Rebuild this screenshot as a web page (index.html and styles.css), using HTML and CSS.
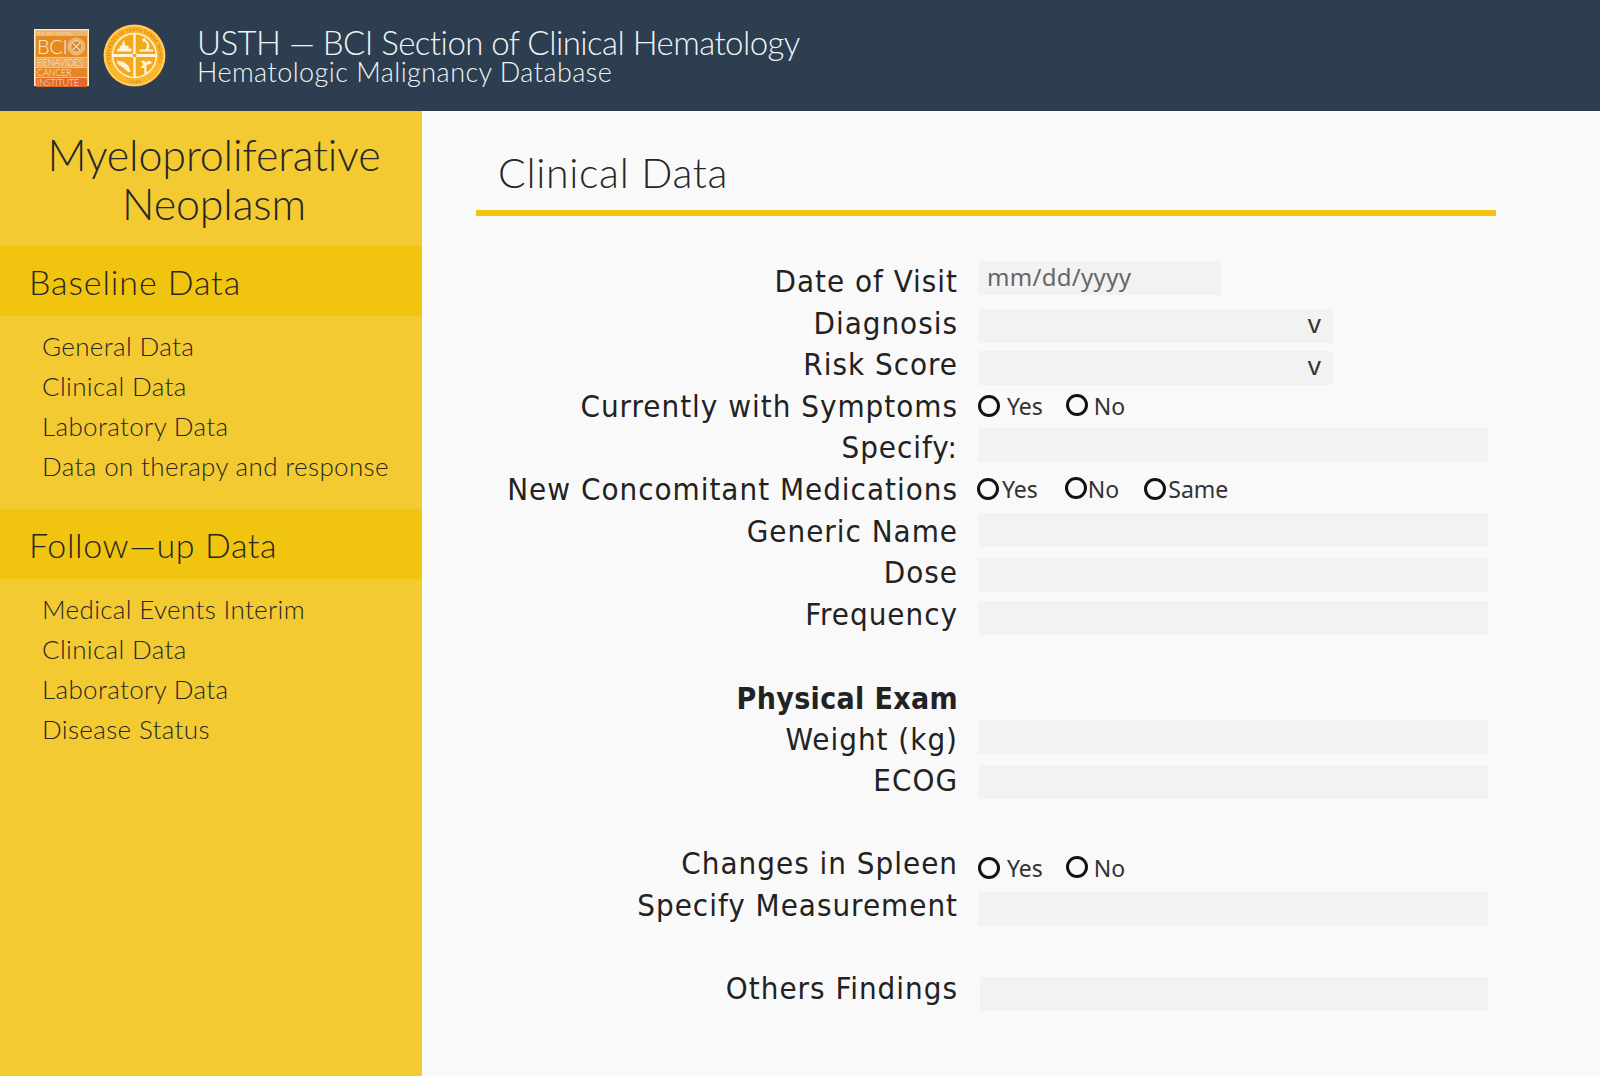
FILE: index.html
```html
<!DOCTYPE html>
<html lang="en">
<head>
<meta charset="utf-8">
<title>Clinical Data</title>
<link rel="stylesheet" href="styles.css">
</head>
<body>
<header class="topbar">
  <div class="logo-bci">
    <div class="bci-hosp">THE UST HOSPITAL</div>
    <div class="bci-main">
      <span class="bci-word">BCI</span>
      <svg class="bci-seal" viewBox="0 0 20 20"><circle cx="10" cy="10" r="9.500" fill="#eab071"/><circle cx="10" cy="10" r="9" fill="none" stroke="#fbe3c0" stroke-width=".6" stroke-dasharray="1 .7"/><circle cx="10" cy="10" r="6" fill="#d68a35" stroke="#fbe3c0" stroke-width=".8"/><path d="M6 6l8 8M14 6l-8 8" stroke="#fbe3c0" stroke-width="1.200"/></svg>
    </div>
    <div class="bci-line bci-l1">BENAVIDES</div>
    <div class="bci-line bci-l2">CANCER</div>
    <div class="bci-line bci-l3">INSTITUTE</div>
  </div>
  <svg class="logo-seal" viewBox="0 0 64 64">
    <defs><path id="seal-arc" d="M14.400 50a25 25 0 1 1 35.200 0"/></defs>
    <circle cx="32" cy="32" r="31.500" fill="#fbb62e"/>
    <circle cx="32" cy="32" r="30.300" fill="none" stroke="#ffe9ae" stroke-width=".8"/>
    <text class="seal-text"><textPath href="#seal-arc" startOffset="50%" text-anchor="middle">UNIVERSITY OF SANTO TOMAS MANILA</textPath></text>
    <text class="seal-year" x="32" y="60" text-anchor="middle">· 1 9 4 6 ·</text>
    <circle cx="32" cy="32" r="23" fill="#fff4d6"/>
    <path d="M30.700 10.500a22 22 0 0 0-20.100 20.100h20.100z" fill="#f6a81c"/>
    <path d="M33.300 10.500a22 22 0 0 1 20.100 20.100h-20.100z" fill="#f6a81c"/>
    <path d="M30.700 53.500a22 22 0 0 1-20.100-20.100h20.100z" fill="#f6a81c"/>
    <path d="M33.300 53.500a22 22 0 0 0 20.100-20.100h-20.100z" fill="#f6a81c"/>
    <circle cx="32" cy="32" r="2.400" fill="#f6a81c" stroke="#fff4d6" stroke-width=".9"/>
    <path d="M14 28h15v-3h-3v-3h-3l-2-6-2 6h-2v3h-2z" fill="#fff4d6"/>
    <path d="M37 28h14v-2.200h-5c2-3 1-7-2-9l-2-2.800-2.500 1.700 1.800 3 1.500-.8c2 1.500 2.500 5 .5 8h-6z" fill="#fff4d6"/>
    <path d="M14 37l7 1.500 5 4 2 6-2 .5-6-5-5-3z" fill="#fff4d6"/>
    <path d="M42 51h2.500l-.5-9 6-2.500-3-2.500-3.500 2-2-2-3 1 2.500 3-3 3.500 4 .5z" fill="#fff4d6"/>
  </svg>
  <div class="site-title">
    <div class="site-name">USTH — BCI Section of Clinical Hematology</div>
    <div class="site-sub">Hematologic Malignancy Database</div>
  </div>
</header>
<div class="layout">
  <aside class="sidebar">
    <h1 class="side-title">Myeloproliferative Neoplasm</h1>
    <h2 class="side-head">Baseline Data</h2>
    <ul class="side-list">
      <li>General Data</li>
      <li>Clinical Data</li>
      <li>Laboratory Data</li>
      <li>Data on therapy and response</li>
    </ul>
    <h2 class="side-head side-head-follow">Follow—up Data</h2>
    <ul class="side-list">
      <li>Medical Events Interim</li>
      <li>Clinical Data</li>
      <li>Laboratory Data</li>
      <li>Disease Status</li>
    </ul>
  </aside>
  <main class="content">
    <h2 class="page-title">Clinical Data</h2>
    <form class="form">
      <div class="row"><label class="lbl">Date of Visit</label><div class="field f-date">mm/dd/yyyy</div></div>
      <div class="row"><label class="lbl">Diagnosis</label><div class="field f-select f-diag">v</div></div>
      <div class="row"><label class="lbl">Risk Score</label><div class="field f-select f-risk">v</div></div>
      <div class="row"><label class="lbl">Currently with Symptoms</label><div class="radios"><span class="radio"></span><span class="opt">Yes</span><span class="radio r2"></span><span class="opt">No</span></div></div>
      <div class="row"><label class="lbl">Specify:</label><div class="field f-full f-specify"></div></div>
      <div class="row"><label class="lbl">New Concomitant Medications</label><div class="radios tight"><span class="radio"></span><span class="opt">Yes</span><span class="radio r2"></span><span class="opt">No</span><span class="radio r3"></span><span class="opt">Same</span></div></div>
      <div class="row"><label class="lbl">Generic Name</label><div class="field f-full f-generic"></div></div>
      <div class="row"><label class="lbl">Dose</label><div class="field f-full f-dose"></div></div>
      <div class="row"><label class="lbl">Frequency</label><div class="field f-full f-freq"></div></div>
      <div class="row r-spaced"><label class="lbl lbl-b">Physical Exam</label></div>
      <div class="row"><label class="lbl">Weight (kg)</label><div class="field f-full f-weight"></div></div>
      <div class="row"><label class="lbl">ECOG</label><div class="field f-full f-ecog"></div></div>
      <div class="row r-spaced"><label class="lbl">Changes in Spleen</label><div class="radios radios-low"><span class="radio"></span><span class="opt">Yes</span><span class="radio r2"></span><span class="opt">No</span></div></div>
      <div class="row"><label class="lbl">Specify Measurement</label><div class="field f-full f-measure"></div></div>
      <div class="row r-spaced"><label class="lbl">Others Findings</label><div class="field f-last"></div></div>
    </form>
  </main>
</div>
</body>
</html>
```
FILE: styles.css
```css
* { box-sizing: border-box; }
html, body { margin: 0; height: 100%; }
body { width: 1600px; height: 1076px; overflow: hidden; background: #f9f9f9; color: #222; font-family: "DejaVu Sans", sans-serif; }

.topbar { height: 111px; background: #2c3e50; display: flex; align-items: center; padding-left: 34px; }
.logo-bci { width: 55px; height: 57px; background: #f0c48c; border: 1px solid #fbe9c8; display: flex; flex-direction: column; padding: 1px 1px; color: #fdeccf; font-family: Lato, sans-serif; font-weight: 300; margin-top: 4px; }
.bci-hosp { font-size: 4px; line-height: 5px; height: 5px; background: #eeb26a; padding-left: 1px; white-space: nowrap; }
.bci-main { height: 21px; display: flex; align-items: center; justify-content: space-between; background: #e58a1f; padding: 0 1px; }
.bci-word { font-size: 20px; line-height: 21px; letter-spacing: -.3px; }
.bci-seal { width: 19px; height: 19px; }
.bci-line { font-size: 9px; line-height: 9px; height: 9px; margin-top: 1px; padding-left: 1px; letter-spacing: -.2px; white-space: nowrap; }
.bci-l1 { background: #e9a55a; }
.bci-l2 { background: #e5862a; }
.bci-l3 { background: #e2682c; }
.logo-seal { width: 63px; height: 63px; margin-left: 14px; }
.seal-text { font-family: "Liberation Serif", serif; font-size: 4.600px; fill: #b86f08; letter-spacing: .2px; }
.seal-year { font-family: "Liberation Serif", serif; font-size: 4.500px; fill: #b86f08; }
.site-title { margin-left: 31px; color: #f1f4f6; font-family: Lato, sans-serif; font-weight: 300; white-space: nowrap; margin-top: -3px; }
.site-name { font-size: 33px; line-height: 36px; letter-spacing: -.55px; }
.site-sub { font-size: 27px; line-height: 24px; letter-spacing: .45px; }

.layout { display: flex; height: 965px; }
.sidebar { width: 422px; background: #f3ca31; font-family: Lato, sans-serif; font-weight: 300; color: #262626; padding-top: 19px; }
.side-title { margin: 0; height: 116px; font-size: 43px; line-height: 49px; font-weight: 300; text-align: center; padding: 0 24px 0 30px; letter-spacing: -.15px; }
.side-head { margin: 0; height: 70px; padding-left: 29px; background: #f1c40f; font-size: 34px; line-height: 72px; font-weight: 300; letter-spacing: .9px; white-space: nowrap; }
.side-head-follow { letter-spacing: .6px; }
.side-list { list-style: none; margin: 0; height: 193px; padding: 10px 0 0 42px; font-size: 26px; line-height: 40px; letter-spacing: .35px; white-space: nowrap; }

.content { flex: 1; padding: 0 0 0 54px; }
.page-title { margin: 0; width: 1020px; height: 105px; padding: 37px 0 0 22px; border-bottom: 6px solid #f1c40f; font-size: 41px; line-height: 50px; font-weight: 300; font-family: Lato, sans-serif; color: #262626; letter-spacing: .7px; }
.form { margin-top: 48px; }
.row { display: flex; align-items: flex-start; height: 41.600px; gap: 20px; }
.r-spaced { margin-top: 41.600px; }
.lbl { flex: 0 0 482px; text-align: right; font-size: 31px; line-height: 40px; font-stretch: condensed; letter-spacing: 1px; white-space: nowrap; color: #222; margin-top: -3px; }
.lbl-b { font-size: 30px; font-weight: 700; letter-spacing: .35px; margin-top: -1px; }

.field { background: #f2f2f2; height: 34px; }
.f-full { width: 510px; }
.f-specify { margin-top: -2.400px; }
.f-generic { margin-top: -.6px; }
.f-dose { margin-top: 2.800px; }
.f-freq { margin-top: 4.200px; }
.f-weight { margin-top: -1.600px; }
.f-ecog { margin-top: 1.800px; }
.f-measure { margin-top: 4px; }
.f-last { width: 508px; margin-top: 5.800px; margin-left: 2px; }
.f-date { width: 243px; margin-top: -3px; padding-left: 9px; font-family: "Noto Sans", sans-serif; font-size: 24px; line-height: 32px; color: #666; letter-spacing: .3px; }
.f-select { width: 355px; text-align: right; padding-right: 12px; font-family: "Noto Sans", sans-serif; font-size: 26px; line-height: 29px; color: #333; }
.f-diag { margin-top: 3.400px; }
.f-risk { margin-top: 3.800px; }

.radios { display: flex; align-items: center; font-family: "Noto Sans", sans-serif; font-size: 23px; line-height: 34px; color: #333; }
.radios-low { margin-top: 5px; }
.radio { width: 22px; height: 22px; border: 3px solid #111; border-radius: 50%; margin-right: 7px; background: #f9f9f9; }
.r2 { margin-left: 23px; margin-right: 6px; margin-top: -2px; }
.r3 { margin-left: 25px; }
.tight { margin-left: -1px; }
.tight .radio { margin-right: 3px; }
.tight .r2 { margin-left: 27px; margin-right: 1px; }
.tight .r3 { margin-right: 2px; }
```
